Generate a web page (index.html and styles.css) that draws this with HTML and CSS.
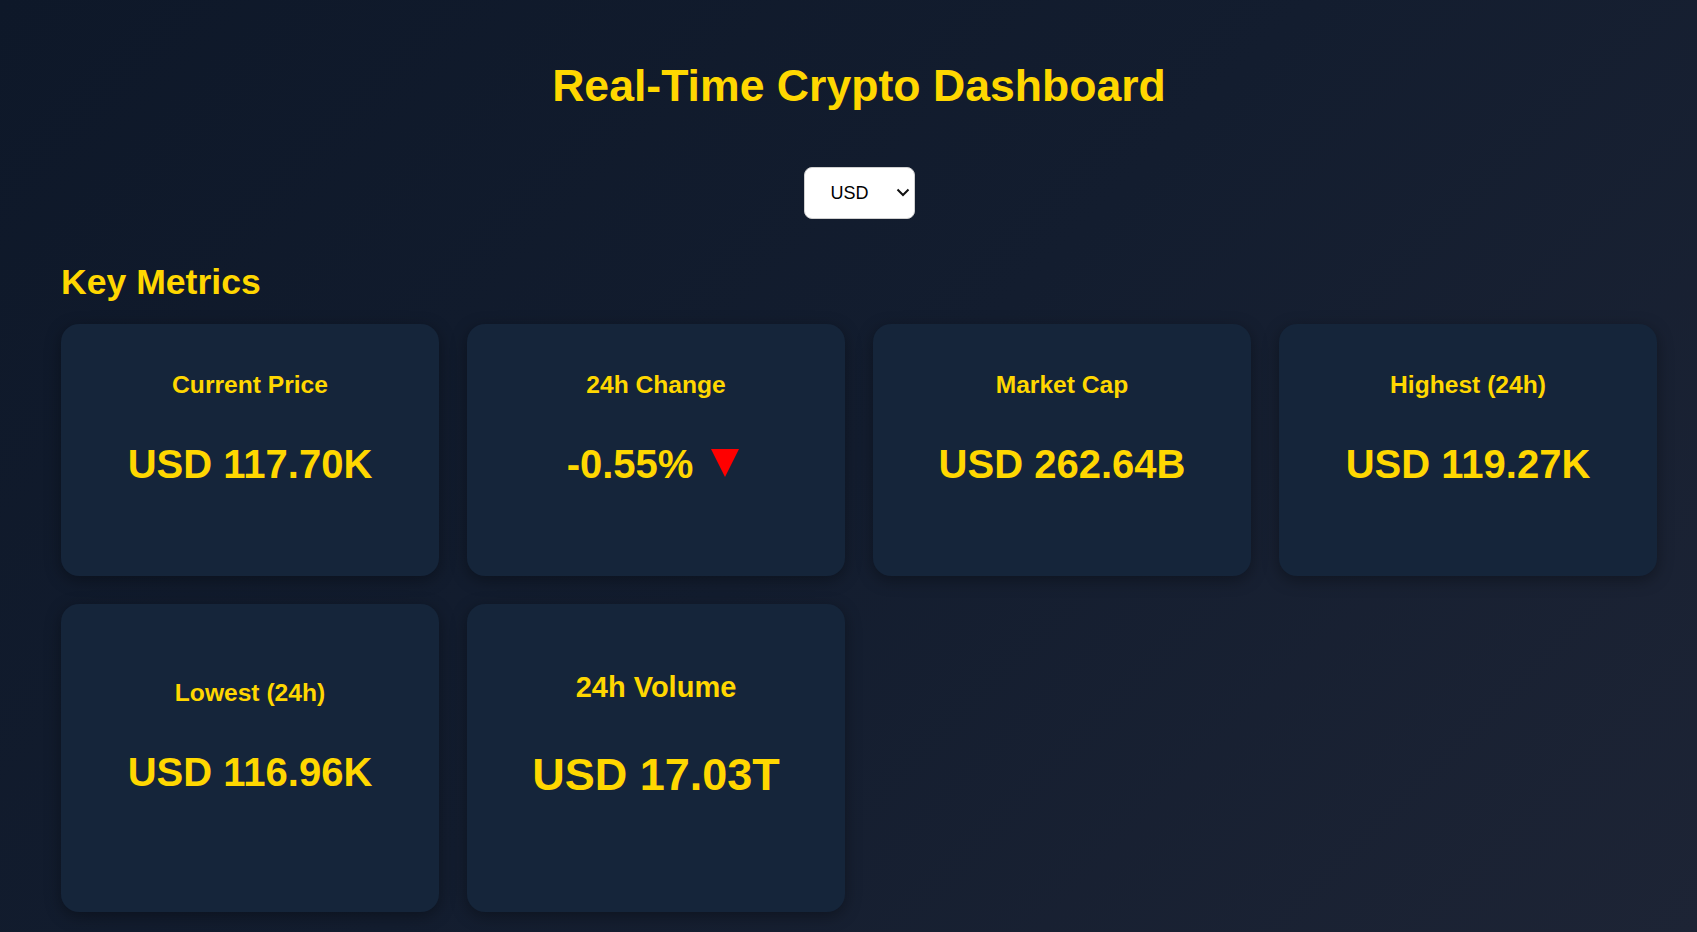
FILE: index.html
```html
<!DOCTYPE html>
<html lang="en">
<head>
<meta charset="utf-8">
<title>Real-Time Crypto Dashboard</title>
<link rel="stylesheet" href="styles.css">
</head>
<body>
<div class="page">
  <h1 class="title">Real-Time Crypto Dashboard</h1>
  <div class="controls">
    <div class="select-wrap">
      <select class="currency">
        <option>USD</option>
        <option>EUR</option>
        <option>INR</option>
      </select>
      <svg class="chev" width="14" height="9" viewBox="0 0 14 9"><polyline points="1.5,1.5 7,7 12.5,1.5" fill="none" stroke="#111" stroke-width="2"/></svg>
    </div>
  </div>
  <h2 class="section">Key Metrics</h2>
  <div class="grid">
    <div class="card">
      <h3 class="label">Current Price</h3>
      <p class="value">USD 117.70K</p>
    </div>
    <div class="card">
      <h3 class="label">24h Change</h3>
      <p class="value change">-0.55%<svg class="down" width="28" height="29" viewBox="0 0 28 29"><polygon points="0,0 28,0 14,28" fill="#ff0000"/></svg></p>
    </div>
    <div class="card">
      <h3 class="label">Market Cap</h3>
      <p class="value">USD 262.64B</p>
    </div>
    <div class="card">
      <h3 class="label">Highest (24h)</h3>
      <p class="value">USD 119.27K</p>
    </div>
    <div class="card">
      <h3 class="label">Lowest (24h)</h3>
      <p class="value">USD 116.96K</p>
    </div>
    <div class="card card-lg">
      <h3 class="label">24h Volume</h3>
      <p class="value">USD 17.03T</p>
    </div>
  </div>
</div>
</body>
</html>
```

FILE: styles.css
```css
* { box-sizing: border-box; }
html, body {
  margin: 0;
  padding: 0;
  min-height: 100%;
}
body {
  font-family: "Liberation Sans", Arial, sans-serif;
  background: linear-gradient(135deg, #0e1829 0%, #131d2f 50%, #1d2435 100%);
  min-height: 932px;
  color: #ffd700;
}
.page {
  padding: 60px 40px 20px 61px;
}
.title {
  margin: 0;
  font-size: 44.6px;
  line-height: 51px;
  font-weight: 700;
  text-align: center;
  color: #ffd700;
}
.controls {
  display: flex;
  justify-content: center;
  margin-top: 56px;
}
.select-wrap {
  position: relative;
  width: 111px;
  height: 52px;
}
.currency {
  -webkit-appearance: none;
  appearance: none;
  width: 111px;
  height: 52px;
  padding: 0 40px 0 26px;
  font-family: "Liberation Sans", Arial, sans-serif;
  font-size: 18px;
  color: #000;
  background: #fff;
  border: 1px solid #d0d0d0;
  border-radius: 8px;
  outline: none;
}
.chev {
  position: absolute;
  right: 5px;
  top: 21px;
  pointer-events: none;
}
.section {
  margin: 43px 0 0 0;
  font-size: 35.6px;
  line-height: 41px;
  font-weight: 700;
  color: #ffd700;
}
.grid {
  margin-top: 21px;
  display: grid;
  grid-template-columns: repeat(4, 1fr);
  grid-template-rows: 252px 308px;
  gap: 28px;
}
.card {
  background: #15253a;
  border-radius: 18px;
  box-shadow: 0 4px 16px rgba(0, 0, 0, 0.35);
  display: flex;
  flex-direction: column;
  align-items: center;
  justify-content: center;
  text-align: center;
}
.label {
  margin: 0 0 42px 0;
  font-size: 24.6px;
  line-height: 28px;
  font-weight: 700;
}
.value {
  margin: 0 0 42px 0;
  font-size: 40px;
  line-height: 46px;
  font-weight: 700;
  display: flex;
  align-items: flex-start;
}
.change {
  padding-right: 6px;
}
.down {
  margin-left: 18px;
  margin-top: 8px;
}
.card-lg .label {
  font-size: 29px;
  line-height: 32px;
  margin-bottom: 46px;
}
.card-lg .value {
  font-size: 45px;
  line-height: 51px;
  margin-bottom: 45px;
}
```
